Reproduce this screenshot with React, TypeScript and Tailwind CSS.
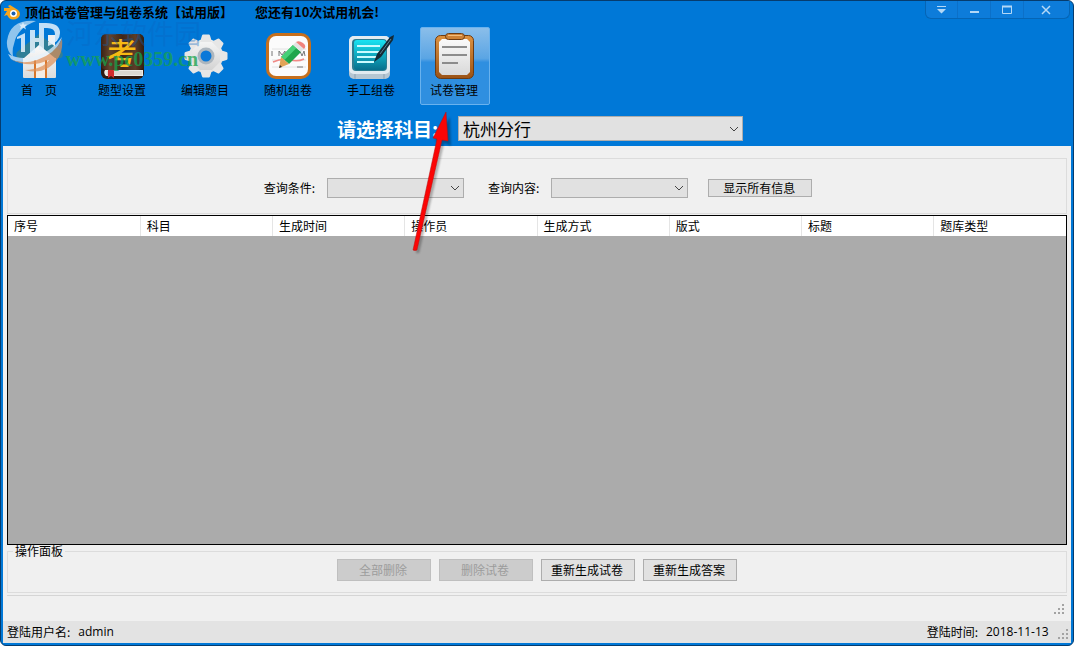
import React from 'react';

interface ToolItem {
  label: string;
  icon: React.ReactNode;
  active?: boolean;
}

const HomeIcon = () => (
  <svg className="w-12 h-12" viewBox="0 0 48 48">
    <defs>
      <linearGradient id="wall" x1="0" y1="0" x2="0" y2="1">
        <stop offset="0" stopColor="#ffffff" />
        <stop offset="1" stopColor="#dcdcdc" />
      </linearGradient>
    </defs>
    <path d="M33 3h7v14h-7z" fill="#f0f0f0" />
    <path d="M8 22 24 8l17 14v23q0 1-1 1H9q-1 0-1-1z" fill="url(#wall)" />
    <path d="M24 2 2 20q-2 4 1 6h6l15-13 16 13h6q3-2 1-6z" fill="#2f7f97" />
    <path d="M19 28h13v18H19z" fill="#d8762b" />
    <path d="M21 28h9v18h-9z" fill="#f5ede5" />
  </svg>
);

const BookIcon = () => (
  <svg className="w-12 h-12 overflow-visible" viewBox="0 0 48 48">
    <defs>
      <linearGradient id="cover" x1="0" y1="0" x2="1" y2="0">
        <stop offset="0" stopColor="#3a2115" />
        <stop offset="0.2" stopColor="#64432c" />
        <stop offset="0.5" stopColor="#402617" />
        <stop offset="0.8" stopColor="#5c3d28" />
        <stop offset="1" stopColor="#331c10" />
      </linearGradient>
    </defs>
    <rect x="3" y="2" width="43" height="45" rx="6" fill="#2e1a10" />
    <path d="M7 38h38v6H8q-3-3-1-6z" fill="#ece9e4" />
    <path d="M9 40h35M9 42h35" stroke="#bdb7ae" strokeWidth="0.7" />
    <rect x="3" y="2" width="43" height="36" rx="5" fill="url(#cover)" />
    <path d="M10 38h6v8l-3-2-3 2z" fill="#cf2c2c" />
    <text x="24" y="32" textAnchor="middle" fontSize="30" fontWeight="500" fontFamily="Noto Sans CJK SC, sans-serif" fill="#f6b913">考</text>
  </svg>
);

const GearIcon = () => (
  <svg className="w-12 h-12" viewBox="0 0 48 48">
    <defs>
      <linearGradient id="gear" x1="0" y1="0" x2="0" y2="1">
        <stop offset="0" stopColor="#f7f7f7" />
        <stop offset="1" stopColor="#d0d0d0" />
      </linearGradient>
    </defs>
    <g fill="#e6e6e6">
      <circle cx="25" cy="24" r="17" fill="url(#gear)" />
      {[0, 45, 90, 135, 180, 225, 270, 315].map((a) => (
        <path key={a} d="M19 10 21 3.500q.3-1 1.200-1h5.600q.9 0 1.200 1l2 6.500z" transform={`rotate(${a} 25 24)`} />
      ))}
    </g>
    <circle cx="25" cy="24" r="8.500" fill="#adb6be" />
    <circle cx="25" cy="24" r="5.500" fill="#0a78d8" />
  </svg>
);

const PencilIcon = () => (
  <svg className="w-12 h-12" viewBox="0 0 48 48">
    <rect x="2" y="1" width="45" height="46" rx="10" fill="#c66f1c" />
    <rect x="5" y="4" width="39" height="40" rx="7" fill="#fbfbfb" />
    <path d="M8 17h34M8 28h34M8 35h34" stroke="#e2e2e2" />
    <path d="M8 19v5M15 24v-5l3 4 3-4v5M36 19l2 5 2-5 1 5M33 35h6" stroke="#777" fill="none" />
    <path d="M9 30q9-4 17-2t14-1" stroke="#f08a86" strokeWidth="1.500" fill="none" />
    <path d="M29 13 37 20 25 32 17 25z" fill="#1fa64c" />
    <path d="M29 13 32.500 16 20.500 28 17 25z" fill="#46d077" />
    <path d="M29 13 32 10 40 17 37 20z" fill="#e3e3e3" />
    <path d="M32 10q3-2 7 1t1 6z" fill="#f0837c" />
    <path d="M17 25 25 32 15 36z" fill="#e2a457" />
    <path d="M16 33 18 35 15 36z" fill="#333" />
  </svg>
);

const TabletIcon = () => (
  <svg className="w-12 h-12" viewBox="0 0 48 48">
    <defs>
      <linearGradient id="pad" x1="0" y1="0" x2="0" y2="1">
        <stop offset="0" stopColor="#19e3f2" />
        <stop offset="1" stopColor="#066f8d" />
      </linearGradient>
    </defs>
    <rect x="2" y="4" width="41" height="43" rx="5" fill="#b6c6d2" />
    <rect x="2" y="4" width="41" height="38" rx="5" fill="#e2ebf1" />
    <path d="M8 42v5M37 42v5" stroke="#8da1b1" />
    <rect x="5" y="7" width="35" height="32" rx="4" fill="#2b7d92" />
    <rect x="7" y="8" width="32" height="30" rx="3" fill="url(#pad)" />
    <path d="M10 14h23M10 20h25M10 25h20M10 30h17" stroke="#c9fbff" strokeWidth="2" />
    <path d="M47 3 43 5 30 22 27 30 34 25 46 8z" fill="#142a36" />
    <path d="M44 7 33 22" stroke="#5a7f8e" />
  </svg>
);

const ClipboardIcon = () => (
  <svg className="w-12 h-12" viewBox="0 0 48 48">
    <defs>
      <linearGradient id="board" x1="0" y1="0" x2="0" y2="1">
        <stop offset="0" stopColor="#dd9240" />
        <stop offset="1" stopColor="#9b5316" />
      </linearGradient>
      <linearGradient id="paper" x1="0" y1="0" x2="0" y2="1">
        <stop offset="0" stopColor="#fafafa" />
        <stop offset="1" stopColor="#d9d9d9" />
      </linearGradient>
    </defs>
    <rect x="5.500" y="3.500" width="38" height="43" rx="5" fill="url(#board)" stroke="#6d3b12" />
    <path d="M12 7h25l3 3v30l-3 3H12l-3-3V10z" fill="url(#paper)" />
    <rect x="15.500" y="1.500" width="19" height="6" rx="3" fill="#cd8237" stroke="#6d3b12" />
    <path d="M18 3.500h14" stroke="#f2bd7d" />
    <path d="M12 15h25M12 23h25M12 31h16" stroke="#8c8c8c" strokeWidth="2" />
  </svg>
);

const tools: ToolItem[] = [
  { label: '首　页', icon: <HomeIcon /> },
  { label: '题型设置', icon: <BookIcon /> },
  { label: '编辑题目', icon: <GearIcon /> },
  { label: '随机组卷', icon: <PencilIcon /> },
  { label: '手工组卷', icon: <TabletIcon /> },
  { label: '试卷管理', icon: <ClipboardIcon />, active: true },
];

const columns = ['序号', '科目', '生成时间', '操作员', '生成方式', '版式', '标题', '题库类型'];

const Dropdown = ({ id, className, options = [] }: { id: string; className: string; options?: string[] }) => (
  <div className="relative flex">
    <select id={id} className={`appearance-none border border-[#adadad] bg-[#e1e1e1] pl-1 pr-5 text-black ${className}`}>
      {options.map((o) => (
        <option key={o}>{o}</option>
      ))}
    </select>
    <svg className="pointer-events-none absolute inset-y-0 right-1 my-auto w-2.5 h-2" viewBox="0 0 10 8" fill="none" stroke="#444">
      <path d="m1 2 4 4 4-4" />
    </svg>
  </div>
);

const PushButton = ({ children, className, disabled }: { children: React.ReactNode; className: string; disabled?: boolean }) => (
  <button
    disabled={disabled}
    className={`flex items-center justify-center border border-[#adadad] bg-[#e1e1e1] pr-0.5 disabled:border-[#bfbfbf] disabled:bg-[#cccccc] disabled:text-[#9c9c9c] ${className}`}
  >
    {children}
  </button>
);

const SizeGrip = () => (
  <svg className="w-3 h-3" viewBox="0 0 12 12" fill="#a3a3a3">
    <path d="M9 1h2v2H9zM5 5h2v2H5zM9 5h2v2H9zM1 9h2v2H1zM5 9h2v2H5zM9 9h2v2H9z" />
  </svg>
);

const AppLogo = () => (
  <svg className="w-4 h-4" viewBox="0 0 16 16">
    <path d="M0 4h6L4 2l2-1 8 5q4 4 0 8-5 3-9 0l-2-3-3 1 3-5H0z" fill="#f7a51c" />
    <circle cx="9.500" cy="9.500" r="3.500" fill="#fff" />
    <circle cx="9.500" cy="9.500" r="2" fill="#1b5fb0" />
  </svg>
);

const WindowControls = () => (
  <div className="flex h-[18px] mr-[3px] rounded-b-md border border-t-0 border-[#0565b5] bg-[#0d7cda] text-[#b4d8f6]">
    <button aria-label="菜单" className="flex w-8 items-center justify-center border-r border-[#0c70c8]">
      <svg className="w-3 h-3" viewBox="0 0 12 12" fill="currentColor"><path d="M1 2h9v1H1zM1 5h9L5.500 9.500z" /></svg>
    </button>
    <button aria-label="最小化" className="flex w-[33px] items-center justify-center border-r border-[#0c70c8]">
      <svg className="w-3 h-3" viewBox="0 0 12 12" fill="currentColor"><path d="M2 7h9v2H2z" /></svg>
    </button>
    <button aria-label="最大化" className="flex w-[33px] items-center justify-center border-r border-[#0c70c8]">
      <svg className="w-3 h-3" viewBox="0 0 12 12" fill="none" stroke="currentColor"><path d="M1.500 2.500h9v7h-9z" /><path d="M1 2.500h10" strokeWidth="2" /></svg>
    </button>
    <button aria-label="关闭" className="flex w-[45px] items-center justify-center pr-0.5">
      <svg className="w-3 h-3" viewBox="0 0 12 12" fill="none" stroke="currentColor" strokeWidth="1.500"><path d="m2 2 8 8M10 2l-8 8" /></svg>
    </button>
  </div>
);

const Watermark = () => (
  <div className="pointer-events-none absolute left-1 top-4 flex">
    <svg className="w-[60px] h-[60px]" viewBox="0 0 60 60">
      <g opacity="0.700">
        <path d="M31 4Q5 2 2 24q-1 9 6 16-1-8 1-13Q12 11 31 4z" fill="#cfe6f7" />
        <path d="M3 37q12 6 24 3 20-5 30-20-5 18-26 24-16 4-25-2z" fill="#e8f3fb" />
        <path d="M5 42q12 6 27 1 18-6 25-21 2 19-14 29-11 6-23 2 18-1 24-10-20 9-39-1z" fill="#e08f55" />
      </g>
      <g fill="#e6f3fd" opacity="0.850">
        <path d="M12 20 20 16v19h-4V21l-4 1zM25 13h5v23h-5zM34 6h7q14 0 14 10 0 9-12 13v-4q7-3 7-8 0-6-8-6h-3v22h-5zM30 21h5v4h-5z" />
        <path d="m18 5 1 2.500 3 0-2 2 1 3-3-2-3 2 1-3-2-2h3z" />
      </g>
    </svg>
    <div className="flex flex-col pl-px">
      <span className="h-8 text-[27px] leading-8 text-[#0a66c0]/35">河东软件园</span>
      <span className="h-5 font-['Liberation_Serif',serif] text-[20px] font-bold leading-5 text-[#17a34c]/75">www.pc0359.cn</span>
    </div>
  </div>
);

const Pointer = () => (
  <svg className="pointer-events-none absolute left-[404px] top-[104px] w-[52px] h-[152px]" viewBox="0 0 52 152">
    <path
      d="M11 148 36 38 30 36 45 12 46 41 39 38 14 148z"
      fill="#000"
      opacity="0.300"
      className="blur-[1px]"
    />
    <path d="M8 145 32 34 28 33 41 7 43 36 37 35 12 145q-2 1-4 0z" fill="#fb0505" stroke="#b01010" strokeWidth="0.500" />
  </svg>
);

export default function App() {
  return (
    <div className="relative flex min-h-screen flex-col overflow-hidden rounded-md border border-[#063c6e] bg-[#0078d7] font-['Noto_Sans_CJK_SC',sans-serif] text-xs text-black">
      <header className="flex flex-col">
        <div className="flex h-[26px] items-start justify-between">
          <div className="flex items-center gap-[5px] pl-[3px] pt-[3px]">
            <AppLogo />
            <h1 className="flex gap-[22px] text-[13px] font-bold leading-4">
              <span>顶伯试卷管理与组卷系统【试用版】</span>
              <span>您还有10次试用机会!</span>
            </h1>
          </div>
          <WindowControls />
        </div>

        <nav className="flex gap-[13px] pl-1">
          {tools.map((t) => (
            <button
              key={t.label}
              className={`flex h-[78px] w-[70px] flex-col items-center rounded-xs border pt-1 pr-0.5 ${
                t.active
                  ? 'border-[#69b2ee] bg-linear-to-b from-[#8abeea] from-0% via-[#5aa5e4] via-40% to-[#2f8fe0] to-45%'
                  : 'border-transparent'
              }`}
            >
              {t.icon}
              <span className="mt-0.5 leading-4">{t.label}</span>
            </button>
          ))}
        </nav>

        <div className="flex h-[41px] items-center justify-center gap-5 pl-1.5 pt-1.5">
          <label htmlFor="subject" className="text-[19px] font-bold leading-6 text-white">请选择科目:</label>
          <Dropdown id="subject" className="h-[25px] w-[285px] text-[17px] leading-5" options={['杭州分行']} />
        </div>
      </header>

      <div className="mx-0.5 mb-0.5 flex flex-1 flex-col bg-[#f0f0f0]">
        <main className="flex flex-1 flex-col px-1 pt-3">
          <section className="flex h-14 items-center justify-center gap-5 border border-[#dcdcdc] pl-0.5 pt-1">
            <div className="flex items-center gap-6">
              <div className="flex items-center gap-3">
                <label htmlFor="field">查询条件:</label>
                <Dropdown id="field" className="h-5 w-[137px]" />
              </div>
              <div className="flex items-center gap-3">
                <label htmlFor="keyword">查询内容:</label>
                <Dropdown id="keyword" className="h-5 w-[137px]" />
              </div>
            </div>
            <PushButton className="h-[18px] w-[104px]">显示所有信息</PushButton>
          </section>

          <div className="mt-px flex-1 border border-black bg-[#ababab]">
            <table className="w-full table-fixed border-collapse">
              <thead>
                <tr className="bg-white">
                  {columns.map((c) => (
                    <th key={c} className="h-5 border-r border-[#e5e5e5] p-0 pl-1.5 text-left font-normal leading-4 last:border-r-0">{c}</th>
                  ))}
                </tr>
              </thead>
            </table>
          </div>

          <fieldset className="-mt-0.5 h-[50px] border border-[#dcdcdc]">
            <legend className="ml-[5px] px-0.5 leading-4">操作面板</legend>
            <div className="flex justify-center gap-2">
              <PushButton disabled className="h-[22px] w-[94px]">全部删除</PushButton>
              <PushButton disabled className="h-[22px] w-[94px]">删除试卷</PushButton>
              <PushButton className="h-[22px] w-[94px]">重新生成试卷</PushButton>
              <PushButton className="h-[22px] w-[94px]">重新生成答案</PushButton>
            </div>
          </fieldset>

          <div className="mt-0.5 flex h-[26px] items-center justify-end border-t border-[#d5d5d5] pr-0.5">
            <SizeGrip />
          </div>
        </main>

        <footer className="flex h-[22px] items-center justify-between bg-[#e3e3e3] pl-1 pr-0.5">
          <p className="flex gap-2">
            <span>登陆用户名:</span>
            <span className="font-['Open_Sans',sans-serif]">admin</span>
          </p>
          <div className="flex items-center gap-1">
            <p className="flex gap-2">
              <span>登陆时间:</span>
              <span className="w-[67px] font-['Open_Sans',sans-serif]">2018-11-13</span>
            </p>
            <div className="self-end">
              <SizeGrip />
            </div>
          </div>
        </footer>
      </div>

      <Watermark />
      <Pointer />
    </div>
  );
}
